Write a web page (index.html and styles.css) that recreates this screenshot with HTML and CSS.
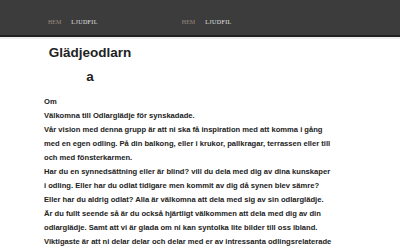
FILE: index.html
```html
<!DOCTYPE html>
<html lang="sv">
<head>
    <meta charset="UTF-8">
    <meta name="viewport" content="width=device-width, initial-scale=1.0">
    <title>Glädjeodlarna</title>
    <link rel="stylesheet" href="styles.css">
</head>
<body>
    <!-- Toppmeny -->
    <div class="header">
        <ul class="menu">
            <li><a href="#" class="current">HEM</a></li>
            <li><a href="#">LJUDFIL</a></li>
        </ul>
        <ul class="menu menu-second">
            <li><a href="#" class="current">HEM</a></li>
            <li><a href="#">LJUDFIL</a></li>
        </ul>
    </div>

    <!-- Innehåll -->
    <div class="content">
        <h1 class="site-title">Glädjeodlarna</h1>
        <div class="about">
            <p>Om</p>
            <p>Välkomna till Odlarglädje för synskadade.</p>
            <p>Vår vision med denna grupp är att ni ska få inspiration med att komma i gång med en egen odling. På din balkong, eller i krukor, pallkragar, terrassen eller till och med fönsterkarmen.</p>
            <p>Har du en synnedsättning eller är blind? vill du dela med dig av dina kunskaper<br>i odling. Eller har du odlat tidigare men kommit av dig då synen blev sämre?<br>Eller har du aldrig odlat? Alla är välkomna att dela med sig av sin odlarglädje.<br>Är du fullt seende så är du också hjärtligt välkommen att dela med dig av din odlarglädje. Samt att vi är glada om ni kan syntolka lite bilder till oss ibland. Viktigaste är att ni delar delar och delar med er av intressanta odlingsrelaterade saker.</p>
        </div>
    </div>
</body>
</html>
```

FILE: styles.css
```css
* {
    margin: 0;
    padding: 0;
    box-sizing: border-box;
}

body {
    background-color: #fff;
    font-family: "Liberation Sans", Arial, sans-serif;
    color: #222;
}

/* Toppmeny */
.header {
    height: 37px;
    background-color: #3c3c3c;
    border-bottom: 2px solid #222;
    display: flex;
    align-items: center;
    padding-left: 48px;
    padding-top: 3px;
}

.menu {
    list-style: none;
    display: flex;
    gap: 10px;
}

.menu-second {
    margin-left: 84px;
}

.menu li a {
    font-family: "Liberation Serif", "Times New Roman", serif;
    font-size: 6px;
    letter-spacing: 0.4px;
    color: #e0e0e0;
    text-decoration: none;
}

.menu li a.current {
    letter-spacing: 0;
    color: #9a8b7c;
}

.content {
    border-top: 2px solid #eee;
    padding-left: 44px;
}

.site-title {
    width: 88px;
    margin-left: 2px;
    margin-top: 2px;
    font-size: 13.5px;
    line-height: 24px;
    text-align: center;
    overflow-wrap: anywhere;
    color: #222;
}

.about {
    width: 294px;
    margin-top: 6px;
    font-size: 7.6px;
    font-weight: bold;
    line-height: 14px;
}
```
